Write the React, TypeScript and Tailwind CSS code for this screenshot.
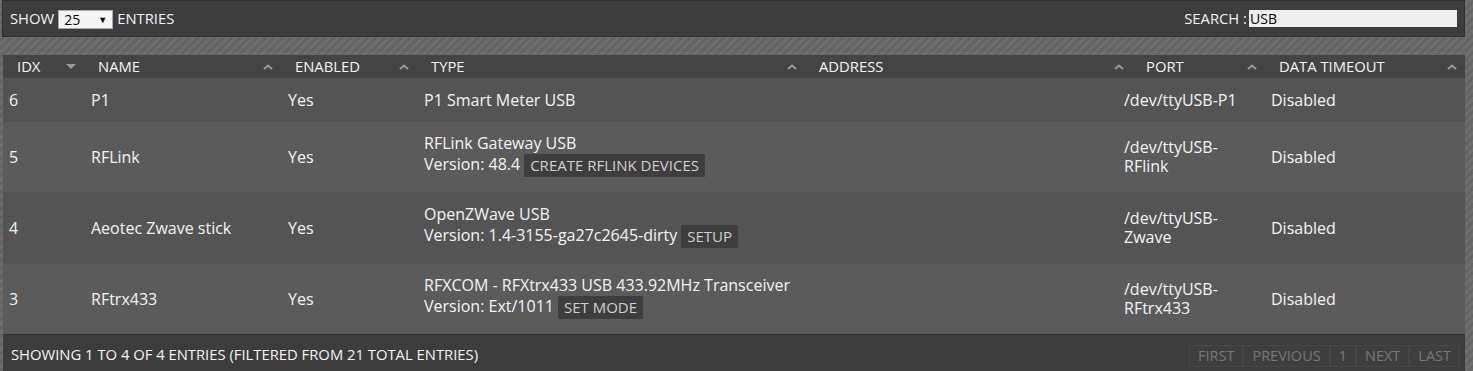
import React from "react";

const font = { fontFamily: '"Open Sans", "Noto Sans", sans-serif' };

function Caret({ down }: { down?: boolean }) {
  if (down)
    return (
      <svg width="10" height="6" viewBox="0 0 10 6" className="shrink-0">
        <path d="M0 0 L10 0 L5 5 Z" fill="#9a9a9a" />
      </svg>
    );
  return (
    <svg width="10" height="6" viewBox="0 0 10 6" className="shrink-0">
      <path d="M1 5 L5 1.5 L9 5" fill="none" stroke="#9a9a9a" strokeWidth="2" />
    </svg>
  );
}

const bodyCols = [81, 197, 136, 388, 312, 147, 201];

const headCols = [
  { label: "IDX", w: 81, down: true },
  { label: "NAME", w: 197 },
  { label: "ENABLED", w: 136 },
  { label: "TYPE", w: 388 },
  { label: "ADDRESS", w: 327 },
  { label: "PORT", w: 133 },
  { label: "DATA TIMEOUT", w: 200 },
];

function Btn({ children }: { children: React.ReactNode }) {
  return (
    <span className="inline-block bg-[#3e3e3e] text-[#d0d0d0] text-[15px] leading-[23px] px-[6px] ml-[4px] align-middle rounded-[1px]">
      {children}
    </span>
  );
}

const rows = [
  {
    idx: "6",
    name: "P1",
    type: [<span key="a">P1 Smart Meter USB</span>],
    port: "/dev/ttyUSB-P1",
    h: "h-[44px]",
    bg: "bg-[#545454]",
    multi: false,
  },
  {
    idx: "5",
    name: "RFLink",
    type: [
      <div key="a">RFLink Gateway USB</div>,
      <div key="b">
        Version: 48.4<Btn>CREATE RFLINK DEVICES</Btn>
      </div>,
    ],
    port: "/dev/ttyUSB-RFlink",
    h: "h-[70px]",
    bg: "bg-[#5b5b5b]",
    multi: true,
  },
  {
    idx: "4",
    name: "Aeotec Zwave stick",
    type: [
      <div key="a">OpenZWave USB</div>,
      <div key="b">
        Version: 1.4-3155-ga27c2645-dirty<Btn>SETUP</Btn>
      </div>,
    ],
    port: "/dev/ttyUSB-Zwave",
    h: "h-[72px]",
    bg: "bg-[#545454]",
    multi: true,
  },
  {
    idx: "3",
    name: "RFtrx433",
    type: [
      <div key="a">RFXCOM - RFXtrx433 USB 433.92MHz Transceiver</div>,
      <div key="b">
        Version: Ext/1011<Btn>SET MODE</Btn>
      </div>,
    ],
    port: "/dev/ttyUSB-RFtrx433",
    h: "h-[70px]",
    bg: "bg-[#5b5b5b]",
    multi: true,
  },
];

export default function App() {
  return (
    <div
      style={font}
      className="w-full h-[371px] overflow-hidden bg-[repeating-linear-gradient(135deg,#6d6d6d_0px,#6d6d6d_3px,#646464_3px,#646464_6px)] pl-[2px] pr-[8px] text-[#f4f4f4]"
    >
      <div className="h-[37px] bg-[#3d3d3d] border border-[#303030] flex items-center justify-between pl-[7px] pr-[7px] text-[14.8px]">
        <div className="flex items-center gap-[4px]">
          <span>SHOW</span>
          <div className="w-[55px] h-[19px] bg-[#f4f4f4] border border-[#aaa] text-black text-[14px] flex items-center justify-between px-[5px] mt-[2px]">
            <span>25</span>
            <span className="text-[9px]">▼</span>
          </div>
          <span>ENTRIES</span>
        </div>
        <div className="flex items-center gap-[2px]">
          <span>SEARCH :</span>
          <div className="w-[208px] h-[17px] bg-[#eeeeee] text-black text-[14px] leading-[17px] px-[1px]">USB</div>
        </div>
      </div>
      <div className="h-[18px]" />
      <div className="ml-[1px] w-[1462px]">
        <div className="flex h-[23px] bg-[#444444] text-[14.8px]">
          {headCols.map((c) => (
            <div
              key={c.label}
              style={{ width: c.w }}
              className="shrink-0 flex items-center justify-between pl-[14px] pr-[8px]"
            >
              <span>{c.label}</span>
              <Caret down={c.down} />
            </div>
          ))}
        </div>
        <table className="w-full border-collapse table-fixed">
          <colgroup>
            {bodyCols.map((w, i) => (
              <col key={i} style={{ width: w }} />
            ))}
          </colgroup>
          <tbody className="text-[16px] leading-[21px]">
            {rows.map((r) => (
              <tr key={r.idx} className={`${r.bg} ${r.h}`}>
                <td className="pl-[6px]">{r.idx}</td>
                <td className="pl-[7px]">{r.name}</td>
                <td className="pl-[7px]">Yes</td>
                <td className={r.multi ? "pl-[7px] pb-[4px]" : "pl-[7px]"}>{r.type}</td>
                <td className="pl-[7px]"></td>
                <td className="pl-[7px] pr-[4px] leading-[19px]">{r.port}</td>
                <td className="pl-[7px]">Disabled</td>
              </tr>
            ))}
          </tbody>
        </table>
        <div className="h-[40px] bg-[#3d3d3d] border-t border-[#333] flex items-center justify-between pl-[8px] pr-[5px] text-[14.8px]">
          <span>SHOWING 1 TO 4 OF 4 ENTRIES (FILTERED FROM 21 TOTAL ENTRIES)</span>
          <div className="flex text-[14.5px] text-[#777] mt-[2px]">
            {["FIRST", "PREVIOUS", "1", "NEXT", "LAST"].map((p) => (
              <span key={p} className="border border-[#474747] bg-[#3f3f3f] px-[8px] leading-[20px]">
                {p}
              </span>
            ))}
          </div>
        </div>
      </div>
    </div>
  );
}
